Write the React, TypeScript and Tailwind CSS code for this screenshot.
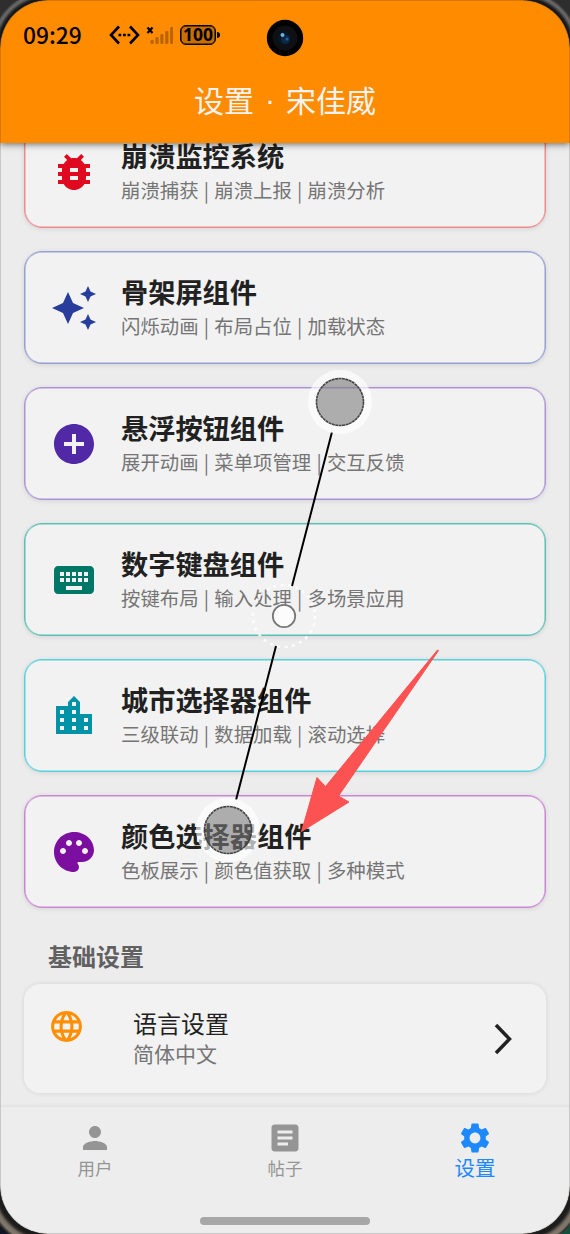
import type { IconType } from "react-icons";
import {
    MdAddCircle,
    MdArticle,
    MdAutoAwesome,
    MdBugReport,
    MdKeyboard,
    MdLanguage,
    MdLocationCity,
    MdPalette,
    MdPerson,
    MdSettings,
} from "react-icons/md";

type Item = {
    title: string;
    desc: string;
    icon: IconType;
    color: string;
    border: string;
};

const items: Item[] = [
    { title: "崩溃监控系统", desc: "崩溃捕获 | 崩溃上报 | 崩溃分析", icon: MdBugReport, color: "text-[#df0a20]", border: "text-[#f08a8c]" },
    { title: "骨架屏组件", desc: "闪烁动画 | 布局占位 | 加载状态", icon: MdAutoAwesome, color: "text-[#283c9b]", border: "text-[#96a0d2]" },
    { title: "悬浮按钮组件", desc: "展开动画 | 菜单项管理 | 交互反馈", icon: MdAddCircle, color: "text-[#5129a6]", border: "text-[#ad93d7]" },
    { title: "数字键盘组件", desc: "按键布局 | 输入处理 | 多场景应用", icon: MdKeyboard, color: "text-[#007767]", border: "text-[#5cc1b5]" },
    { title: "城市选择器组件", desc: "三级联动 | 数据加载 | 滚动选择", icon: MdLocationCity, color: "text-[#0092a7]", border: "text-[#53d3e0]" },
    { title: "颜色选择器组件", desc: "色板展示 | 颜色值获取 | 多种模式", icon: MdPalette, color: "text-[#7d0fa0]", border: "text-[#cb86d5]" },
];

const signalBars = [4, 7, 10, 13, 17];

function StatusBar() {
    return (
        <div className="flex items-center h-[70px] pl-[23px] text-black">
            <span className="w-[59px] text-[22.8px] leading-[68px] font-medium">09:29</span>
            <svg className="ml-[26px]" width="32" height="22" viewBox="0 0 32 22" fill="none" stroke="currentColor" strokeWidth="2.6">
                <path d="M11 2.5L3 11l8 8.5M22 2.500l8 8.500-8 8.500" />
                <path d="M10.500 11h2.800M15 11h2.800M19.500 11h2.800" />
            </svg>
            <svg className="ml-[5px]" width="28" height="20" viewBox="0 0 28 20">
                <path d="M2.500 2.500l5 5.500M7.500 2.500l-5 5.500" stroke="currentColor" strokeWidth="2.200" />
                {signalBars.map((h, i) => (
                    <rect key={h} x={5.500 + i * 4.900} y={19 - h} width="3.200" height={h} rx="1.200" fill="#b96400" />
                ))}
            </svg>
            <div className="ml-[7px] flex items-center">
                <div className="w-[36px] h-[20px] rounded-[6px] border border-black shadow-[inset_0_0_0_0.5px_#000] bg-[#c96e00] flex items-center justify-center text-[17.5px] leading-none font-bold font-['Open_Sans',sans-serif]">
                    100
                </div>
                <div className="ml-px w-[3px] h-[6px] rounded-r bg-black" />
            </div>
        </div>
    );
}

function Header() {
    return (
        <header className="relative z-10 h-[143px] shrink-0 bg-[#ff8c00] shadow-[0_1px_7px_rgba(0,0,0,0.6)]">
            <StatusBar />
            <h1 className="flex justify-center text-[30px] leading-[59px] text-[#f3f3f3]">
                <span>设置</span>
                <span className="w-8 text-center font-['Liberation_Sans',sans-serif]">·</span>
                <span>宋佳威</span>
            </h1>
            <svg className="absolute left-[266px] top-[19px]" width="38" height="38" viewBox="0 0 38 38">
                <circle cx="19" cy="19" r="18.200" fill="#000" />
                <circle cx="19" cy="19" r="12.500" fill="#0e1013" />
                <circle cx="18.500" cy="19" r="7" fill="#091522" />
                <circle cx="19.500" cy="20.500" r="4.500" fill="#0d2844" />
                <circle cx="16.500" cy="16" r="2" fill="#69b5df" />
                <circle cx="21" cy="20" r="1.500" fill="#285c96" />
            </svg>
        </header>
    );
}

function FeatureCard({ title, desc, icon: Icon, color, border }: Item) {
    return (
        <div
            className={`flex items-center h-[113px] pl-[25px] rounded-[18px] border border-current bg-[#f2f2f2] shadow-[inset_0_0_0_0.5px_currentColor,0_1px_5px_rgba(0,0,0,0.1)] ${border}`}
        >
            <Icon className={`size-12 shrink-0 ${color}`} />
            <div className="ml-[23px] mt-px whitespace-nowrap">
                <div className="text-[27.2px] leading-[35px] font-bold text-[#212121]">{title}</div>
                <div className="text-[19.4px] leading-[34px] [word-spacing:0.9px] text-[#757575]">{desc}</div>
            </div>
        </div>
    );
}

function LanguageCard() {
    return (
        <div className="flex h-[109px] mt-[10px] pl-6 pr-[33px] rounded-[16px] bg-[#f2f2f2] shadow-[0_0_5px_rgba(0,0,0,0.1)]">
            <MdLanguage className="size-[37px] mt-6 text-[#ff8f00]" />
            <div className="ml-12 mt-[23px] flex-1">
                <div className="text-[24px] leading-[32px] text-[#212121]">语言设置</div>
                <div className="text-[21px] leading-[29px] text-[#757575]">简体中文</div>
            </div>
            <svg className="self-center" width="20" height="32" viewBox="0 0 20 32" fill="none" stroke="#212121" strokeWidth="3.500">
                <path d="M3 2l13.500 14L3 30" />
            </svg>
        </div>
    );
}

function TabBar() {
    return (
        <nav className="relative h-[128px] shrink-0 grid grid-cols-3 bg-[#ededed] border-t border-[#e4e4e4] shadow-[0_-1px_3px_rgba(0,0,0,0.03)]">
            <div className="flex flex-col items-center pt-[13px] text-[#959595]">
                <MdPerson className="size-9" />
                <span className="text-[17.5px] leading-[24px]">用户</span>
            </div>
            <div className="flex flex-col items-center pt-[13px] text-[#959595]">
                <MdArticle className="size-9" />
                <span className="text-[17.5px] leading-[24px]">帖子</span>
            </div>
            <div className="flex flex-col items-center pt-[13px] text-[#1e88ff]">
                <MdSettings className="size-9" />
                <span className="text-[20.500px] leading-[23px]">设置</span>
            </div>
            <div className="absolute left-1/2 -translate-x-1/2 bottom-[9px] w-[170px] h-2 rounded-full bg-[#a7a7a7]" />
        </nav>
    );
}

// Pinch gesture handles and the pointer arrow, floating over the whole screen
function GestureOverlay() {
    return (
        <svg className="absolute inset-0 z-20 pointer-events-none" width="570" height="1234" viewBox="0 0 570 1234" fill="none">
            <path d="M332 432L292 586M276 646L236 800" stroke="#000" strokeWidth="2" />
            {[[340, 402], [228, 830]].map(([cx, cy]) => (
                <g key={cy}>
                    <circle cx={cx} cy={cy} r="28" stroke="#fff" strokeOpacity="0.65" strokeWidth="8" />
                    <circle cx={cx} cy={cy} r="23.500" fill="#7b7b7b" fillOpacity="0.58" stroke="#444" strokeWidth="1.600" strokeDasharray="3 0.500" />
                </g>
            ))}
            <circle cx="284" cy="616" r="31" stroke="#fff" strokeOpacity="0.8" strokeWidth="2.500" strokeDasharray="3 4.500" />
            <circle cx="284" cy="616" r="11.200" fill="#fcfcfc" stroke="#777" strokeWidth="1.800" />
            <path
                d="M437.500 650L325.500 786.500L317 777.500L301.500 831.500L349 802L338.500 796L438.500 650.500Z"
                fill="#fc5352"
                stroke="#fc5352"
                strokeLinejoin="round"
            />
        </svg>
    );
}

export default function App() {
    return (
        <div
            lang="zh-CN"
            className="relative w-[570px] h-[1234px] overflow-hidden bg-[linear-gradient(90deg,#101624_50%,#14513d_50%)] font-['Noto_Sans_CJK_SC',sans-serif]"
        >
            <div className="flex flex-col h-full rounded-[48px] overflow-hidden bg-[#ececec]">
                <Header />
                <main className="flex-1 min-h-0 overflow-hidden px-6">
                    <div className="-mt-7 flex flex-col gap-[23px]">
                        {items.map((item) => (
                            <FeatureCard key={item.title} {...item} />
                        ))}
                    </div>
                    <h2 className="mt-[30px] ml-[24px] text-[24px] leading-[36px] font-bold text-[#616161]">基础设置</h2>
                    <LanguageCard />
                </main>
                <TabBar />
            </div>
            {/* phone bezel visible around the rounded corners */}
            <div className="absolute inset-x-0 top-0 z-10 h-[617px] rounded-t-[48px] border border-b-0 border-black/15 shadow-[0_0_3px_4px_#161616,0_0_2px_8px_#707070,0_0_0_24px_#2e2e2e] [clip-path:inset(0)]" />
            <div className="absolute inset-x-0 bottom-0 z-10 h-[617px] rounded-b-[48px] border border-t-0 border-black/15 shadow-[0_0_3px_6px_#1c1c1c,0_0_1px_12px_#80776b,0_0_0_14px_#3a3732] [clip-path:inset(0)]" />
            <GestureOverlay />
        </div>
    );
}
